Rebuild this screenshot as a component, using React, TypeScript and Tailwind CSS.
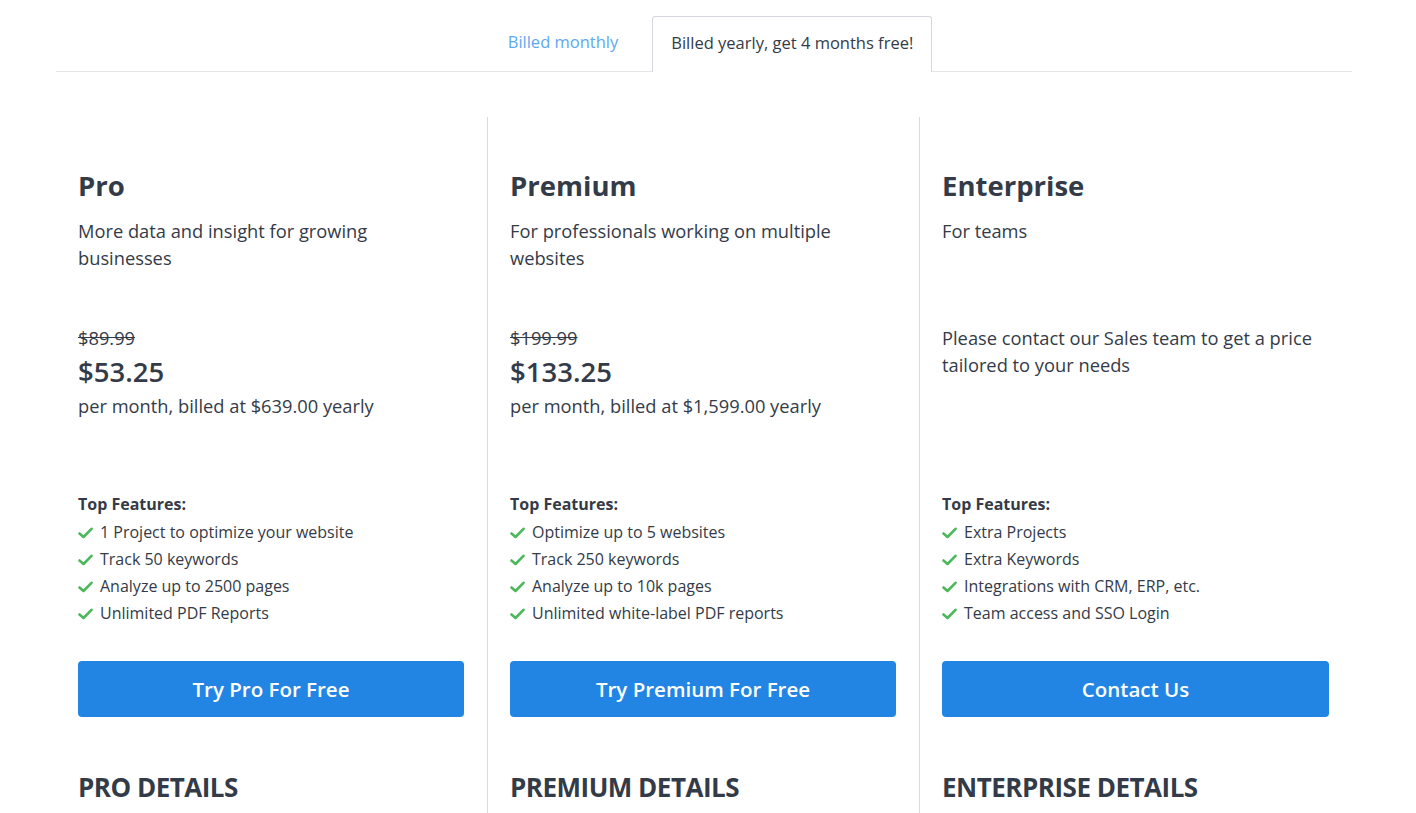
import React from 'react'

const plans = [
  {
    name: 'Pro',
    desc: 'More data and insight for growing businesses',
    oldPrice: '$89.99',
    price: '$53.25',
    billed: 'per month, billed at $639.00 yearly',
    features: ['1 Project to optimize your website', 'Track 50 keywords', 'Analyze up to 2500 pages', 'Unlimited PDF Reports'],
    cta: 'Try Pro For Free',
    details: 'PRO DETAILS',
  },
  {
    name: 'Premium',
    desc: 'For professionals working on multiple websites',
    oldPrice: '$199.99',
    price: '$133.25',
    billed: 'per month, billed at $1,599.00 yearly',
    features: ['Optimize up to 5 websites', 'Track 250 keywords', 'Analyze up to 10k pages', 'Unlimited white-label PDF reports'],
    cta: 'Try Premium For Free',
    details: 'PREMIUM DETAILS',
  },
  {
    name: 'Enterprise',
    desc: 'For teams',
    contact: 'Please contact our Sales team to get a price tailored to your needs',
    features: ['Extra Projects', 'Extra Keywords', 'Integrations with CRM, ERP, etc.', 'Team access and SSO Login'],
    cta: 'Contact Us',
    details: 'ENTERPRISE DETAILS',
  },
]

const Check = () => (
  <svg width="15" height="12" viewBox="0 0 15 12" className="shrink-0">
    <path d="M1.5 6.5 L5.5 10 L13.5 1.8" fill="none" stroke="#4cb85c" strokeWidth="2.6" strokeLinecap="round" strokeLinejoin="round" />
  </svg>
)

export default function App() {
  return (
    <div className="min-h-screen bg-white text-[#343b48]" style={{ fontFamily: '"Open Sans", "Noto Sans", sans-serif' }}>
      <div className="ml-[56px] w-[1296px]">
        {/* Billing tabs */}
        <div className="flex justify-center items-end gap-4 pl-[14px] pt-4 border-b border-[#e3e5e9]">
          <button className="h-[55px] pb-[3px] px-[18px] text-[16.5px] text-[#5ea8f1]">Billed monthly</button>
          <button className="h-[56px] pb-[3px] -mb-px px-[18px] text-[16.5px] text-[#343b48] bg-white border border-b-0 border-[#d4d7de] rounded-t-[3px]">
            Billed yearly, get 4 months free!
          </button>
        </div>

        {/* Plans */}
        <div className="grid grid-cols-[431px_432px_433px] mt-[45px]">
          {plans.map((p, i) => (
            <div key={p.name} className={`pl-[22px] pr-[23px] pt-[50px] pb-10 ${i > 0 ? 'border-l border-[#d9dbe0]' : ''}`}>
              <h2 className="text-[27.5px] leading-[38px] font-bold">{p.name}</h2>
              <p className="mt-[12px] h-[107px] text-[18.3px] leading-[27px] pr-14">{p.desc}</p>

              <div className="h-[167px]">
                {p.contact ? (
                  <p className="text-[18.3px] leading-[27px]">{p.contact}</p>
                ) : (
                  <>
                    <p className="text-[18.3px] leading-[27px] line-through">{p.oldPrice}</p>
                    <p className="mt-[3px] text-[27.5px] leading-[36px] font-semibold">{p.price}</p>
                    <p className="mt-[2px] text-[18.3px] leading-[27px]">{p.billed}</p>
                  </>
                )}
              </div>

              <p className="text-[16px] leading-[27px] font-bold">Top Features:</p>
              <ul>
                {p.features.map(f => (
                  <li key={f} className="flex items-center gap-[7px] text-[16px] leading-[27px] first:mt-[1px]">
                    <Check />
                    <span>{f}</span>
                  </li>
                ))}
              </ul>

              <button className="mt-[34px] w-full h-[56px] rounded-[4px] bg-[#2285e4] text-white text-[20.5px] font-semibold">
                {p.cta}
              </button>

              <h3 className="mt-[52px] text-[26px] leading-[36px] font-bold tracking-[-0.5px]">{p.details}</h3>
            </div>
          ))}
        </div>
      </div>
    </div>
  )
}
